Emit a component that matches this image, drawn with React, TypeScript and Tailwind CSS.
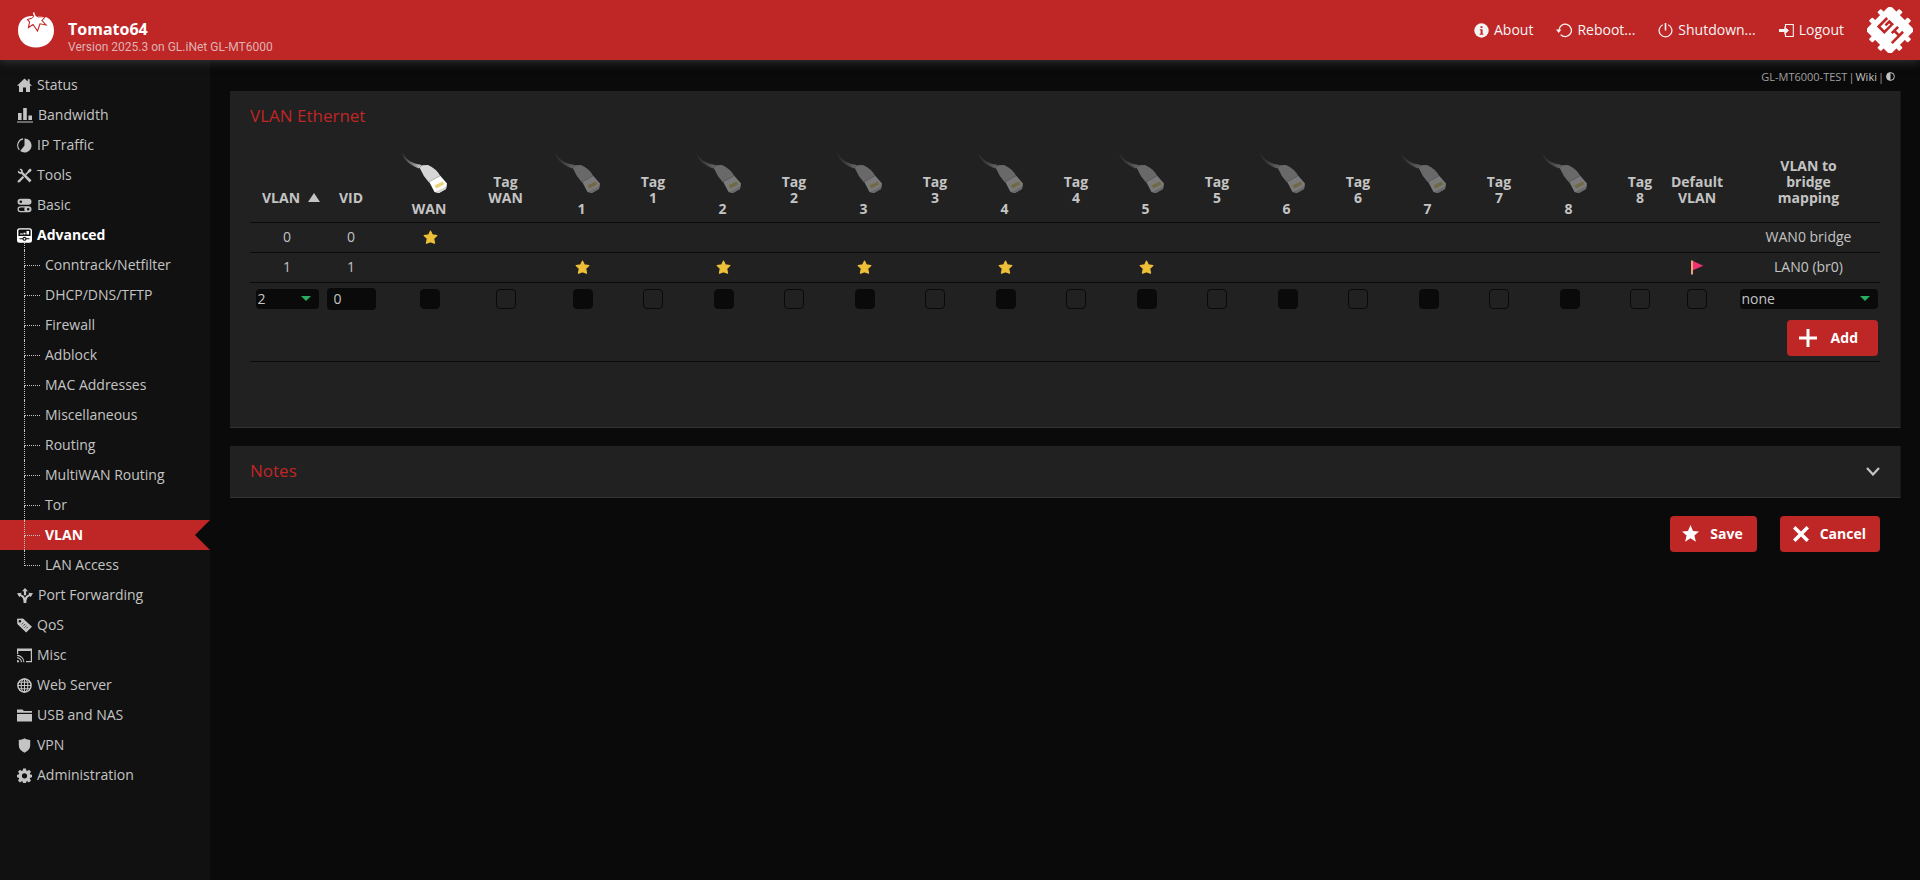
import type { ReactNode } from "react";

type SvgProps = { children: ReactNode; wide?: boolean };

function Icon({ children, wide }: SvgProps) {
  return (
    <svg
      viewBox={wide ? "0 0 16 15" : "0 0 15 15"}
      className={wide ? "h-[15px] w-4 shrink-0" : "h-[15px] w-[15px] shrink-0"}
      fill="currentColor"
      aria-hidden="true"
    >
      {children}
    </svg>
  );
}

const icons = {
  status: (
    <Icon>
      <path d="M7.500.5 0 7.800h2V14h4V9.600h3V14h4V7.800h2L12.700 5.400V1.200h-2v2.200z" />
    </Icon>
  ),
  bandwidth: (
    <Icon wide>
      <path d="M1 5h3.600v7H1zM6.200 0h3.600v12H6.200zM11.400 7.500H15V12h-3.600zM0 13.400h16v1.200H0z" />
    </Icon>
  ),
  traffic: (
    <Icon>
      <path d="M7.500.5a7 7 0 1 1-4.300 12.500L7.500 7.500z" />
      <path d="M6 .9A6.700 6.700 0 0 0 2.300 11.800" fill="none" stroke="currentColor" strokeWidth="1.100" />
    </Icon>
  ),
  tools: (
    <Icon>
      <path d="M1 2.500 3.300 4.300 4.300 3.300 2.500 1C4.500.2 6.300 1.800 5.800 4L14.500 12.300 12.600 14.400 4.300 5.800C2 6.300.2 4.600 1 2.500z" />
      <path d="M9.800 4.400 11.800 1.400 13.200.4l1.500 1.500-.9 1.500-2.900 2-1.700 1.800-1.300-1.300zM5.700 8.100l1.500 1.500L2.700 14.200.8 14.500.5 13z" />
    </Icon>
  ),
  basic: (
    <Icon>
      <path
        fillRule="evenodd"
        d="M3.500.8h8a3 3 0 0 1 0 6h-8a3 3 0 0 1 0-6zM3.800 2.500a1.300 1.300 0 1 0 0 2.600 1.300 1.300 0 0 0 0-2.600zM3.500 8.200h8a3 3 0 0 1 0 6h-8a3 3 0 0 1 0-6zM3.500 9.400a1.800 1.800 0 0 0 0 3.600h4.300a3.200 3.200 0 0 1 0-3.600zM11.200 9.900a1.300 1.300 0 1 0 0 2.600 1.300 1.300 0 0 0 0-2.600z"
      />
    </Icon>
  ),
  advanced: (
    <Icon>
      <path
        fillRule="evenodd"
        d="M2.500.3h10A2.500 2.500 0 0 1 15 2.800v9.400a2.500 2.500 0 0 1-2.500 2.500h-10A2.500 2.500 0 0 1 0 12.200V2.800A2.500 2.500 0 0 1 2.500.3zM2.700 1.500A1.300 1.300 0 0 0 1.400 2.800V8h12.200V2.800a1.300 1.300 0 0 0-1.300-1.300zM2.500 10.300v.9h2.900a2.200 2.200 0 0 0 4.200 0h2.900v-.9H9.600a2.200 2.200 0 0 0-4.200 0z"
      />
      <path d="M3 5.400h3v1.200H3zM6.500 4.700h2v1.900h-2zM9.500 3h2.500v3.600H9.500z" />
      <circle cx="7.500" cy="10.800" r=".9" />
    </Icon>
  ),
  forwarding: (
    <Icon wide>
      <path d="M8 0l3 3.300H9.100v4h-2.200v-4H5zM0 5.300l4.600-.5-.8 1.500C6 7 7.400 8.300 8 10c.6-1.700 2-3 4.200-3.700l-.8-1.500 4.600.5-2.400 4-.7-1.400C10.500 8.900 9.400 10.500 9.400 15H6.600C6.600 10.500 5.500 8.900 3.100 7.900l-.7 1.400z" />
    </Icon>
  ),
  qos: (
    <Icon>
      <path
        fillRule="evenodd"
        d="M0 .8 6 .4 15 8.800 9.200 14.600.300 6zM2.900 2a1.300 1.300 0 1 0 0 2.600 1.300 1.300 0 0 0 0-2.600z"
      />
      <path
        d="M6.300 4.700 4.600 6.500M8 6.100 5.900 8.200M9.400 7.500 7.300 9.600M10.800 8.900 9 10.700"
        stroke="#111"
        strokeWidth=".8"
        strokeDasharray="1.500 .5"
      />
    </Icon>
  ),
  misc: (
    <Icon>
      <path d="M0 .5h15v13.700H9V13h4.800V3H1.200v3H0zM0 12a2.300 2.300 0 0 1 2.300 2.300H0z" />
      <path d="M0 9.800a4.500 4.500 0 0 1 4.500 4.500M0 7.400a6.900 6.900 0 0 1 6.900 6.900" fill="none" stroke="currentColor" strokeWidth="1.100" />
    </Icon>
  ),
  web: (
    <Icon>
      <g fill="none" stroke="currentColor" strokeWidth="1.100">
        <circle cx="7.500" cy="7.500" r="6.600" strokeWidth="1.500" />
        <ellipse cx="7.500" cy="7.500" rx="3.300" ry="6.600" />
        <path d="M7.500 1v13M1 7.500h13M2 4.200h11M2 10.800h11" />
      </g>
    </Icon>
  ),
  usb: (
    <Icon>
      <path d="M0 1.500h5.500l1.300 1.500H15v1.700H0zM0 5.900h15v7.600H0z" />
    </Icon>
  ),
  vpn: (
    <Icon>
      <path d="M7.500.3c1.600 1.200 3.500 1.700 5.700 1.700v5.500c0 3.300-2.300 5.600-5.700 7.200C4.100 13.100 1.800 10.800 1.800 7.500V2C4 2 5.900 1.500 7.500.3z" />
    </Icon>
  ),
  admin: (
    <Icon>
      <path
        fillRule="evenodd"
        d="M6.100.5h2.800l.4 2 1 .4 1.700-1.200 2 2-1.200 1.700.4 1 2 .4v2.400l-2 .5-.4 1 1.200 1.700-2 2-1.700-1.200-1 .4-.4 1.900H6.100l-.4-1.900-1-.4L3 14.400l-2-2 1.200-1.700-.4-1-1.800-.5V6.800l1.800-.4.4-1L1 3.700l2-2 1.700 1.200 1-.4zM7.500 5.200a2.600 2.600 0 1 0 0 5.200 2.600 2.600 0 0 0 0-5.200z"
      />
    </Icon>
  ),
  about: (
    <Icon>
      <circle cx="7.500" cy="7.500" r="7.200" />
      <path d="M6.500 3.200h2v1.800h-2zM5.800 6.200h2.800v4.600h.8v1H5.700v-1h.9V7.200h-.8z" fill="#bf2626" />
    </Icon>
  ),
  reboot: (
    <Icon wide>
      <path d="M3 7.500A6.200 6.200 0 1 1 4.600 11.600" fill="none" stroke="currentColor" strokeWidth="1.300" />
      <path d="M0 6.500h5.400L2.700 10z" />
    </Icon>
  ),
  shutdown: (
    <Icon>
      <path d="M4.800 1.700a6.400 6.400 0 1 0 5.400 0" fill="none" stroke="currentColor" strokeWidth="1.200" />
      <path d="M6.700 0h1.600v7.500H6.700z" />
    </Icon>
  ),
  logout: (
    <Icon>
      <path d="M6.500 4V1.500h7.800v12H6.500V11" fill="none" stroke="currentColor" strokeWidth="1.100" />
      <path d="M0 6h5.300V3.300l4.700 4.200-4.700 4.200V9H0z" />
    </Icon>
  ),
};

function TomatoLogo() {
  return (
    <svg viewBox="0 0 36 36" className="h-9 w-9 shrink-0" aria-hidden="true">
      <path
        d="M18 4.500C25 2.500 36 5 36 18.500 36 29 28 35.500 18 35.500S0 29 0 18.500C0 5 11 2.500 18 4.500z"
        fill="#fff"
      />
      <path
        d="M9.500 7.500 14.500 6 17 3.500 20 5l7.500-.5-3.500 4 4 4.500-6-1.200L19.500 19 15 12.500l-4.500 3 1-5.500z"
        fill="#fff"
        stroke="#bf2626"
        strokeWidth="1.100"
      />
      <path d="M17.500 6 15.500.5" stroke="#fff" strokeWidth="1.500" />
      <path d="M13.500 7 17.500 3.800 21 6.500z" fill="#fff" />
    </svg>
  );
}

function GearLogo() {
  return (
    <svg viewBox="-23 -23 46 46" className="h-[46px] w-[46px] shrink-0" aria-hidden="true">
      <g transform="rotate(-45)">
        <rect x="-17.500" y="-17.500" width="35" height="35" rx="4" fill="#fff" />
        <g fill="#fff">
          {[-6, 6].map((p) => (
            <g key={p}>
              <rect x={p - 2.5} y="-21.500" width="5" height="43" rx="1" />
              <rect x="-21.500" y={p - 2.5} width="43" height="5" rx="1" />
            </g>
          ))}
        </g>
        <g fill="none" stroke="#bf2626" strokeWidth="2.600">
          <path d="M6.500 -10.500H-5.500V-2.500H5.500V-6.500H0" />
          <path d="M-8 10.500H8M-1 3.500H8M2.500 3.500V10.500" />
        </g>
      </g>
    </svg>
  );
}

function Cable({ active }: { active: boolean }) {
  return (
    <svg viewBox="0 0 56 46" className={active ? "mx-auto h-[46px] w-14" : "mx-auto h-[46px] w-14 opacity-40"} aria-hidden="true">
      <defs>
        <linearGradient id="cable-fade" x1="0" y1="0" x2="20" y2="0" gradientUnits="userSpaceOnUse">
          <stop offset="0" stopColor="#888" stopOpacity="0.200" />
          <stop offset="1" stopColor="#ddd" />
        </linearGradient>
      </defs>
      <path d="M0 1C1 7 5 13 17 17.500L19.500 14C10 12.500 4 9 0 1z" fill="url(#cable-fade)" />
      <path d="M17.500 16.500 20 14.200 26 14Q35 18 38.500 25.500L27 31.500Q21 25 17.500 16.500z" fill="#d6d6d6" />
      <path d="M27 30.500 38 24.500 45 32.500 44 38 37 42 32.500 41z" fill="#fff" />
      <path d="M27 30.800 38 24.800" stroke="#aaa" strokeWidth="1" />
      <path d="M44.800 33 44 38 37 42 33 41 43.500 36z" fill="#d4d4d4" />
      <path d="M32.500 34.500 40.700 30.500 42.300 33.300 34.500 37.500z" fill="#e8d27a" />
    </svg>
  );
}

function Star() {
  return (
    <svg viewBox="0 0 15 15" className="mx-auto h-[15px] w-[15px]" role="img" aria-label="Yes">
      <path
        d="M7.500 1.200 9.300 5l4.500.6-3.200 3 .9 4.600-4-1.500-4 1.500.9-4.600-3.200-3L5.700 5z"
        fill="#eec038"
        stroke="#eec038"
        strokeWidth="1.300"
        strokeLinejoin="round"
      />
    </svg>
  );
}

function Flag() {
  return (
    <svg viewBox="0 0 15 15" className="mx-auto h-[15px] w-[15px]" role="img" aria-label="Default">
      <path d="M1 .5h2v14H1z" fill="#e8a27c" />
      <path d="M3 1 13.300 5.800 3 10.200z" fill="#f0326e" />
    </svg>
  );
}

const menu = [
  { label: "Status", icon: icons.status },
  { label: "Bandwidth", icon: icons.bandwidth },
  { label: "IP Traffic", icon: icons.traffic },
  { label: "Tools", icon: icons.tools },
  { label: "Basic", icon: icons.basic },
  {
    label: "Advanced",
    icon: icons.advanced,
    items: [
      "Conntrack/Netfilter",
      "DHCP/DNS/TFTP",
      "Firewall",
      "Adblock",
      "MAC Addresses",
      "Miscellaneous",
      "Routing",
      "MultiWAN Routing",
      "Tor",
      "VLAN",
      "LAN Access",
    ],
  },
  { label: "Port Forwarding", icon: icons.forwarding },
  { label: "QoS", icon: icons.qos },
  { label: "Misc", icon: icons.misc },
  { label: "Web Server", icon: icons.web },
  { label: "USB and NAS", icon: icons.usb },
  { label: "VPN", icon: icons.vpn },
  { label: "Administration", icon: icons.admin },
];

function Submenu({ items }: { items: string[] }) {
  return (
    <ul className="relative">
      <li aria-hidden="true" className="absolute -top-2 left-6 h-2 border-l border-dotted border-[#c4c4c4]" />
      {items.map((item, i) => {
        const active = item === "VLAN";
        const last = i === items.length - 1;
        return (
          <li key={item}>
            <a
              href="#"
              className={
                active
                  ? "flex h-[30px] items-center bg-[#bf2626] pl-6 font-bold text-white"
                  : "flex h-[30px] items-center pl-6"
              }
            >
              <span className="flex h-full w-4 flex-col">
                <span className="h-4 border-b border-l border-dotted border-[#c4c4c4]" />
                {!last && <span className="flex-1 border-l border-dotted border-[#c4c4c4]" />}
              </span>
              <span className="flex-1 pl-[5px]">{item}</span>
              {active && (
                <svg viewBox="0 0 15 30" className="h-[30px] w-[15px]" aria-hidden="true">
                  <path d="M15 0V30L0 15z" fill="#0a0a0a" />
                </svg>
              )}
            </a>
          </li>
        );
      })}
    </ul>
  );
}

const ports = ["WAN", "1", "2", "3", "4", "5", "6", "7", "8"];
const box = "mx-auto block h-5 w-5 appearance-none rounded border border-[#0a0a0a]";

function Select({ label, value, width }: { label: string; value: string; width: string }) {
  return (
    <div className={`relative mx-auto ${width}`}>
      <select
        aria-label={label}
        className="block h-5 w-full appearance-none rounded bg-[#0a0a0a] px-[2px] text-sm leading-5 text-[#c4c4c4]"
      >
        <option>{value}</option>
      </select>
      <svg viewBox="0 0 10 5" className="pointer-events-none absolute right-2 top-[7px] h-[5px] w-[10px]" aria-hidden="true">
        <path d="M0 0H10L5 5z" fill="#27ae60" />
      </svg>
    </div>
  );
}

function Button({ label, roomy, children }: { label: string; roomy?: boolean; children: ReactNode }) {
  return (
    <button
      type="button"
      className={
        roomy
          ? "flex h-9 items-center gap-[14px] rounded bg-[#bf2626] pl-3 pr-5 text-sm font-bold text-white"
          : "flex h-9 items-center gap-[10px] rounded bg-[#bf2626] pl-3 pr-[14px] text-sm font-bold text-white"
      }
    >
      <svg viewBox="0 0 18 18" className="h-[18px] w-[18px] shrink-0" fill="#fff" aria-hidden="true">
        {children}
      </svg>
      {label}
    </button>
  );
}

const panel = "border-b border-r border-b-[#333] border-r-[#181818] bg-[#212121] px-5";

export default function App() {
  return (
    <div className="flex min-h-screen flex-col bg-[#0a0a0a] font-['Open_Sans',sans-serif] text-sm text-[#c4c4c4]">
      <header className="relative z-10 flex h-[60px] items-center bg-[#bf2626] pl-[18px] pr-[7px] text-white shadow-[0_1px_10px_#3a3a3a]">
        <TomatoLogo />
        <div className="flex-1 pl-[14px] pt-[14px]">
          <h1 className="text-base leading-5 font-bold">Tomato64</h1>
          <p className="font-[Roboto,sans-serif] text-xs leading-4 text-[#deb2b2]">Version 2025.3 on GL.iNet GL-MT6000</p>
        </div>
        <nav aria-label="System" className="flex items-center gap-[23px] pr-[23px] text-[#f4f4f4]">
          <a href="#" className="flex items-center gap-[5px]">{icons.about}About</a>
          <a href="#" className="flex items-center gap-[5px]">{icons.reboot}Reboot...</a>
          <a href="#" className="flex items-center gap-[5px]">{icons.shutdown}Shutdown...</a>
          <a href="#" className="flex items-center gap-[5px]">{icons.logout}Logout</a>
        </nav>
        <GearLogo />
      </header>

      <div className="flex flex-1">
        <nav aria-label="Main" className="w-[210px] shrink-0 bg-[#111] pt-[10px]">
          <ul>
            {menu.map((m) => (
              <li key={m.label}>
                <a
                  href="#"
                  className={
                    m.items
                      ? "flex h-[30px] items-center gap-[5px] pl-[17px] font-bold text-white"
                      : "flex h-[30px] items-center gap-[5px] pl-[17px]"
                  }
                >
                  {m.icon}
                  {m.label}
                </a>
                {m.items && <Submenu items={m.items} />}
              </li>
            ))}
          </ul>
        </nav>

        <main className="min-w-0 flex-1 pl-5 pr-[19px]">
          <div className="flex h-[31px] items-center justify-end gap-px pr-[6px] pt-[2px] text-[11px] text-[#a0a0a0]">
            <span>GL-MT6000-TEST</span>
            <span>|</span>
            <a href="#" className="text-[#c4c4c4]">Wiki</a>
            <span>|</span>
            <button type="button" aria-label="Toggle theme" className="pl-px">
              <svg viewBox="0 0 9 9" className="h-[9px] w-[9px]" aria-hidden="true">
                <circle cx="4.500" cy="4.500" r="3.900" fill="none" stroke="#c4c4c4" />
                <path d="M4.500.5a4 4 0 0 0 0 8z" fill="#c4c4c4" />
              </svg>
            </button>
          </div>

          <section className={`${panel} pt-[15px] pb-[65px]`}>
            <h2 className="mb-[15px] text-[17px] leading-5 text-[#bf2626]">VLAN Ethernet</h2>
            <table className="w-full table-fixed border-collapse text-center">
              <colgroup>
                <col className="w-[74px]" />
                <col className="w-[54px]" />
                {ports.map((p) => [
                  <col key={p} className={p === "WAN" ? "w-[104px]" : "w-[107px]"} />,
                  <col key={`t${p}`} className={p === "WAN" ? "w-[47px]" : "w-[34px]"} />,
                ])}
                <col className="w-[80px]" />
                <col className="w-[143px]" />
              </colgroup>
              <thead>
                <tr className="h-[81px] border-b border-[#0a0a0a] align-bottom leading-4">
                  <th className="pb-4 pl-2">
                    <span className="flex items-center justify-center gap-2">
                      VLAN
                      <svg viewBox="0 0 12 9" className="h-[9px] w-3" aria-hidden="true">
                        <path d="M6 0 12 9H0z" fill="#c4c4c4" />
                      </svg>
                    </span>
                  </th>
                  <th className="pb-4">VID</th>
                  {ports.map((p) => [
                    <th key={p} className="pb-[5px]">
                      <Cable active={p === "WAN"} />
                      <span className="block pr-[2px] pt-1">{p}</span>
                    </th>,
                    <th key={`t${p}`} className="pb-4">Tag {p}</th>,
                  ])}
                  <th className="pb-4">Default VLAN</th>
                  <th className="px-9 pb-4">VLAN to bridge mapping</th>
                </tr>
              </thead>
              <tbody>
                {[
                  { vid: "0", on: ["WAN"], def: false, bridge: "WAN0 bridge" },
                  { vid: "1", on: ["1", "2", "3", "4", "5"], def: true, bridge: "LAN0 (br0)" },
                ].map((row) => (
                  <tr key={row.vid} className="h-[30px] border-b border-[#0a0a0a]">
                    <td>{row.vid}</td>
                    <td>{row.vid}</td>
                    {ports.map((p) => [
                      <td key={p}>{row.on.includes(p) && <Star />}</td>,
                      <td key={`t${p}`} />,
                    ])}
                    <td>{row.def && <Flag />}</td>
                    <td>{row.bridge}</td>
                  </tr>
                ))}
                <tr className="h-[33px]">
                  <td><Select label="VLAN" value="2" width="w-[63px]" /></td>
                  <td>
                    <input aria-label="VID" defaultValue="0" className="mx-auto block h-[22px] w-[49px] rounded bg-[#0a0a0a] px-[7px] text-sm" />
                  </td>
                  {ports.map((p) => [
                    <td key={p}>
                      <input type="checkbox" aria-label={`Port ${p}`} className={`${box} bg-[#0a0a0a]`} />
                    </td>,
                    <td key={`t${p}`}>
                      <input type="checkbox" aria-label={`Tag ${p}`} className={box} />
                    </td>,
                  ])}
                  <td><input type="checkbox" aria-label="Default VLAN" className={box} /></td>
                  <td><Select label="Bridge" value="none" width="w-[138px]" /></td>
                </tr>
                <tr className="h-[46px] border-b border-[#0a0a0a]">
                  <td colSpan={22}>
                    <div className="flex justify-end pr-[2px]">
                      <Button label="Add" roomy>
                        <path d="M7.500 0h3v7.500H18v3h-7.500V18h-3v-7.500H0v-3h7.500z" />
                      </Button>
                    </div>
                  </td>
                </tr>
              </tbody>
            </table>
          </section>

          <section className={`${panel} mt-[18px] flex h-[52px] items-center justify-between`}>
            <h2 className="text-[17px] leading-5 text-[#bf2626]">Notes</h2>
            <button type="button" aria-label="Expand notes">
              <svg viewBox="0 0 14 9" className="h-[9px] w-[14px]" aria-hidden="true">
                <path d="M1 1 7 7.500 13 1" fill="none" stroke="#c4c4c4" strokeWidth="2.200" />
              </svg>
            </button>
          </section>

          <div className="mt-[18px] flex justify-end gap-[23px] pr-[21px]">
            <Button label="Save">
              <path d="M8.500 0 11 6l6 .4-4.600 4 1.500 6.400-5.400-3.500L3.100 16.800l1.500-6.400L0 6.400 6 6z" />
            </Button>
            <Button label="Cancel">
              <path d="M1 3.500 3.500 1 9 6.500 14.500 1 17 3.500 11.500 9 17 14.500 14.500 17 9 11.500 3.500 17 1 14.500 6.500 9z" />
            </Button>
          </div>
        </main>
      </div>
    </div>
  );
}
